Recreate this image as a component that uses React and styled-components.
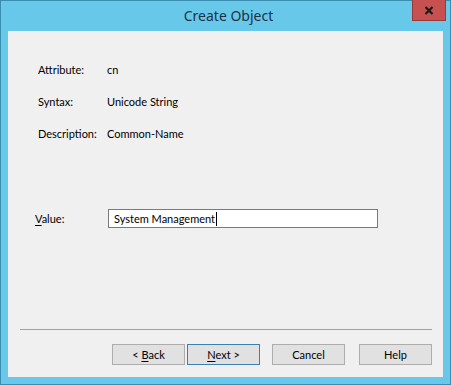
import React from "react";
import styled, { createGlobalStyle } from "styled-components";

const Global = createGlobalStyle`
  html, body { margin: 0; padding: 0; background: #ffffff; }
  body { font-family: "Lato", "Noto Sans", sans-serif; }
`;

const Window = styled.div`
  box-sizing: border-box;
  width: 451px;
  height: 385px;
  background: #68c8e9;
  border: 1px solid #3b8db0;
  display: flex;
  flex-direction: column;
`;

const TitleBar = styled.div`
  height: 30px;
  display: grid;
  grid-template-columns: 1fr auto 1fr;
  align-items: start;
`;

const Title = styled.div`
  grid-column: 2;
  font-family: "Noto Sans", sans-serif;
  font-size: 14px;
  line-height: 30px;
  color: #1a3346;
  padding-left: 6px;
`;

const CloseButton = styled.div`
  grid-column: 3;
  justify-self: end;
  margin-top: -1px;
  margin-right: 4px;
  width: 34px;
  height: 21px;
  background: #c75050;
  border: 1px solid #9c3838;
  border-top: none;
  box-sizing: border-box;
  display: flex;
  align-items: center;
  justify-content: center;
`;

const Client = styled.div`
  flex: 1;
  margin: 0 7px 7px 7px;
  background: #f0f0f0;
  display: flex;
  flex-direction: column;
  font-size: 11px;
  color: #000;
`;

const Form = styled.div`
  flex: 1;
  padding: 31px 0 0 30px;
  display: flex;
  flex-direction: column;
`;

const Row = styled.div`
  display: grid;
  grid-template-columns: 69px 1fr;
  align-items: center;
  height: 16px;
  margin-bottom: ${(p) => p.$gap || 16}px;
`;

const Label = styled.span`
  line-height: 16px;
  margin-left: ${(p) => p.$shift || 0}px;
`;

const Value = styled.span`
  line-height: 16px;
`;

const InputRow = styled.div`
  display: grid;
  grid-template-columns: 70px 270px;
  align-items: center;
  height: 19px;
`;

const TextBox = styled.div`
  box-sizing: border-box;
  height: 19px;
  background: #fff;
  border: 1px solid #7a7a7a;
  padding: 0 5px;
  line-height: 17px;
  display: flex;
  align-items: center;
`;

const Caret = styled.span`
  display: inline-block;
  width: 1px;
  height: 14px;
  background: #000;
  margin-left: 1px;
`;

const Separator = styled.div`
  height: 1px;
  background: #a0a0a0;
  margin: 0 11px 0 12px;
`;

const ButtonBar = styled.div`
  display: flex;
  justify-content: flex-end;
  padding: 14px 11px 12px 0;
`;

const Button = styled.div`
  box-sizing: border-box;
  width: 73px;
  height: 21px;
  background: #e1e1e1;
  border: 1px solid ${(p) => (p.$default ? "#3c7fb1" : "#adadad")};
  display: flex;
  align-items: center;
  justify-content: center;
  margin-left: ${(p) => p.$gap || 0}px;
  line-height: 16px;
  white-space: pre;
`;

const U = styled.span`
  text-decoration: underline;
  text-underline-offset: 2px;
`;

export default function App() {
  return (
    <>
      <Global />
      <Window>
        <TitleBar>
          <Title>Create Object</Title>
          <CloseButton>
            <svg width="10" height="9" viewBox="0 0 10 9">
              <path d="M1.5 1 L8.5 8 M8.5 1 L1.5 8" stroke="#1a1a1a" strokeWidth="2.2" />
            </svg>
          </CloseButton>
        </TitleBar>
        <Client>
          <Form>
            <Row>
              <Label>Attribute:</Label>
              <Value>cn</Value>
            </Row>
            <Row>
              <Label>Syntax:</Label>
              <Value>Unicode String</Value>
            </Row>
            <Row $gap={67}>
              <Label>Description:</Label>
              <Value>Common-Name</Value>
            </Row>
            <InputRow>
              <Label $shift={-3}>
                <U>V</U>alue:
              </Label>
              <TextBox>
                System Management<Caret />
              </TextBox>
            </InputRow>
          </Form>
          <Separator />
          <ButtonBar>
            <Button>
              <span>
                {"< "}
                <U>B</U>ack
              </span>
            </Button>
            <Button $default $gap={2}>
              <span>
                <U>N</U>
                {"ext >"}
              </span>
            </Button>
            <Button $gap={12}>Cancel</Button>
            <Button $gap={14}>Help</Button>
          </ButtonBar>
        </Client>
      </Window>
    </>
  );
}
